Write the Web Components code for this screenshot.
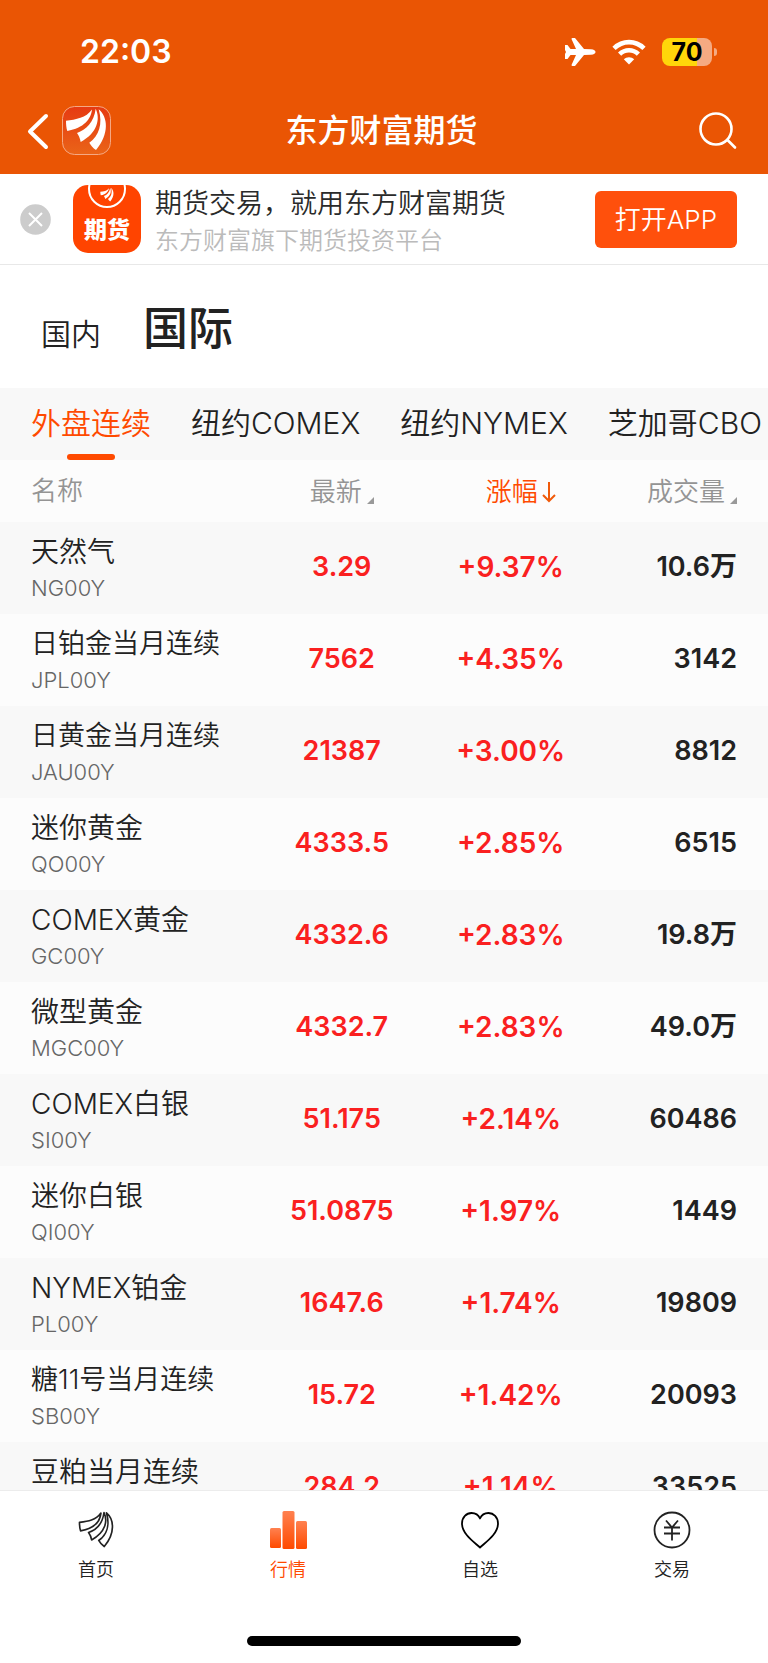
<!DOCTYPE html>
<html lang="zh-CN">
<head>
<meta charset="utf-8">
<meta name="viewport" content="width=device-width, initial-scale=1">
<title>东方财富期货</title>
<style>
  html, body { height: 100%; margin: 0; }
  body {
    font-family: Inter, "Noto Sans CJK SC", sans-serif;
    font-weight: 350;
    color: #222;
    background: #fff;
  }
</style>
</head>
<body>
<futures-app>
  <status-bar slot="top" time="22:03" battery="70"></status-bar>
  <title-bar slot="top">东方财富期货</title-bar>
  <app-banner slot="promo">
    期货交易，就用东方财富期货
    <span slot="sub">东方财富旗下期货投资平台</span>
  </app-banner>
  <market-tabs slot="promo"></market-tabs>
  <exchange-tabs slot="promo"></exchange-tabs>
  <quote-table></quote-table>
  <bottom-nav slot="bottom"></bottom-nav>
</futures-app>

<script>
const FEATHERS = `
  <path d="M4 14.7C14 13.5 24 12 30 3.5C29 13 22 22 5.3 25C4.3 22 4 18 4 14.7Z"/>
  <path d="M15 27C24 24 32 16 33.7 2.8C38.5 13 35.5 27 18.7 36C18 32 16.5 29 15 27Z"/>
  <path d="M36.7 3.3C46 11 47.5 28 34 44C31 42 28.5 39 27.3 36.7C37 30 41 18 36.7 3.3Z"/>
`;

const BUTTON_RESET = `
  button {
    margin: 0;
    padding: 0;
    border: 0;
    background: none;
    font: inherit;
    color: inherit;
    cursor: pointer;
  }
  svg { display: block; }
`;

class BaseElement extends HTMLElement {
  constructor() {
    super();
    this.attachShadow({ mode: "open" });
  }

  connectedCallback() {
    this.shadowRoot.innerHTML = this.template();
  }
}

class FuturesApp extends BaseElement {
  template() {
    return `
      <style>
        :host { display: flex; flex-direction: column; height: 100vh; overflow: hidden; }
        header { background: #ea5504; color: #fff; }
        header, footer, .promo { flex: none; }
        main { flex: 1; min-height: 0; overflow: hidden; }
      </style>
      <header><slot name="top"></slot></header>
      <div class="promo"><slot name="promo"></slot></div>
      <main><slot></slot></main>
      <footer><slot name="bottom"></slot></footer>
    `;
  }
}

class StatusBar extends BaseElement {
  template() {
    return `
      <style>
        :host {
          display: flex;
          align-items: center;
          justify-content: space-between;
          height: 36px;
          padding: 34px 51px 17px 80px;
        }
        time { font-size: 32px; font-weight: 600; line-height: 36px; }
        .icons { display: flex; align-items: center; gap: 16px; }
        svg { display: block; }
        .battery { display: flex; align-items: center; gap: 2px; }
        .level {
          width: 50px;
          border-radius: 8px;
          background: linear-gradient(90deg, #ffd60a 70%, #f5aa82 70%);
          color: #000;
          font-size: 25px;
          font-weight: 700;
          line-height: 28px;
          text-align: center;
        }
        .nub { width: 3px; height: 8px; border-radius: 0 4px 4px 0; background: #f5aa82; }
      </style>
      <time>${this.getAttribute("time")}</time>
      <div class="icons">
        <svg width="32" height="30" viewBox="0 0 32 30" fill="#fff" aria-label="飞行模式">
          <path d="M1 8H3.5L6.5 12H12L7.5 2Q7.5 1 8.5 1H11L20 12L27 12.2C30 12.4 31.5 13.6 31.5 15C31.5 16.4 30 17.6 27 17.8L20 18L11 29H8.5Q7.5 29 7.5 28L12 18H6.5L3.5 22H1V17L2 15L1 13Z"/>
        </svg>
        <svg width="34" height="26" viewBox="0 0 34 26" fill="none" stroke="#fff" aria-label="无线网络">
          <path d="M2 9.3C10.5 1 23.5 1 32 9.3" stroke-width="4.6"/>
          <path d="M7.6 15.2C13 10 21 10 26.4 15.2" stroke-width="4.6"/>
          <path d="M17 25.5L11.8 20.3C14.5 17.5 19.5 17.5 22.2 20.3Z" fill="#fff" stroke="none"/>
        </svg>
        <div class="battery">
          <div class="level">${this.getAttribute("battery")}</div>
          <div class="nub"></div>
        </div>
      </div>
    `;
  }
}

class TitleBar extends BaseElement {
  template() {
    return `
      <style>
        ${BUTTON_RESET}
        :host { display: grid; grid-template-columns: 1fr auto 1fr; align-items: center; height: 87px; padding: 0 31px 0 26px; }
        .left { display: flex; align-items: center; gap: 12px; }
        h1 { margin: 0; font-size: 32px; font-weight: 500; line-height: 36px; }
        .search { justify-self: end; }
      </style>
      <div class="left">
        <button aria-label="返回">
          <svg width="24" height="38" viewBox="0 0 24 38" fill="none" stroke="#fff" stroke-width="4" stroke-linecap="round" stroke-linejoin="round">
            <path d="M20 4L4 19.5L20 35"/>
          </svg>
        </button>
        <button aria-label="东方财富">
          <svg width="49" height="49" viewBox="0 0 49 49">
            <defs>
              <linearGradient id="g" x1="0" y1="0" x2="0" y2="1">
                <stop offset="0" stop-color="#e63a12"/>
                <stop offset="1" stop-color="#ea6418"/>
              </linearGradient>
            </defs>
            <rect x=".5" y=".5" width="48" height="48" rx="12" fill="url(#g)" stroke="#f5a883"/>
            <g fill="#fff">${FEATHERS}</g>
          </svg>
        </button>
      </div>
      <h1><slot></slot></h1>
      <button class="search" aria-label="搜索">
        <svg width="38" height="38" viewBox="0 0 38 38" fill="none" stroke="#fff" stroke-width="2.6" stroke-linecap="round">
          <circle cx="17" cy="17" r="15.5"/>
          <path d="M28.5 28L36 35.5"/>
        </svg>
      </button>
    `;
  }
}

class AppBanner extends BaseElement {
  template() {
    return `
      <style>
        ${BUTTON_RESET}
        :host {
          display: flex;
          align-items: center;
          height: 90px;
          padding: 0 31px 0 20px;
          border-bottom: 1px solid #e8e8e8;
        }
        .logo {
          display: flex;
          flex-direction: column;
          align-items: center;
          width: 68px;
          height: 68px;
          margin: 0 14px 0 22px;
          border-radius: 15px;
          background: #ff4400;
          color: #fff;
          font-size: 23px;
          font-weight: 900;
          line-height: 42px;
          overflow: hidden;
        }
        .text { flex: 1; padding-top: 6px; line-height: 37px; white-space: nowrap; }
        .title { font-size: 27px; color: #2a2a2a; }
        .sub { font-size: 24px; color: #bbb; }
        .open {
          padding: 0 20px;
          border-radius: 6px;
          background: #ff500c;
          color: #fff;
          font-size: 26px;
          line-height: 57px;
        }
      </style>
      <button aria-label="关闭">
        <svg width="31" height="31" viewBox="0 0 31 31">
          <circle cx="15.5" cy="15.5" r="15.3" fill="#ccc"/>
          <path d="M9 9L22 22M22 9L9 22" stroke="#fff" stroke-width="2"/>
        </svg>
      </button>
      <div class="logo">
        <svg width="40" height="24" viewBox="0 0 40 24">
          <circle cx="20" cy="4" r="18" fill="none" stroke="#fff" stroke-width="2"/>
          <g fill="#fff" transform="translate(12 2) scale(.33)">${FEATHERS}</g>
        </svg>
        <span>期货</span>
      </div>
      <div class="text">
        <div class="title"><slot></slot></div>
        <div class="sub"><slot name="sub"></slot></div>
      </div>
      <button class="open">打开APP</button>
    `;
  }
}

class MarketTabs extends BaseElement {
  template() {
    return `
      <style>
        ${BUTTON_RESET}
        :host { display: block; }
        div { display: flex; align-items: baseline; gap: 42px; padding: 32px 41px 22px; }
        button { font-size: 30px; line-height: 64px; }
        button[aria-selected="true"] { font-size: 45px; font-weight: 500; }
      </style>
      <div role="tablist">
        <button role="tab" aria-selected="false">国内</button>
        <button role="tab" aria-selected="true">国际</button>
      </div>
    `;
  }
}

class ExchangeTabs extends BaseElement {
  template() {
    const tabs = ["外盘连续", "纽约COMEX", "纽约NYMEX", "芝加哥CBO"];
    return `
      <style>
        ${BUTTON_RESET}
        :host { display: block; background: #f8f8f8; }
        div { display: flex; gap: 40px; padding-left: 31px; overflow: hidden; }
        button {
          display: flex;
          flex-direction: column;
          align-items: center;
          flex: none;
          height: 72px;
          padding-top: 4px;
          box-sizing: border-box;
          font-size: 30px;
          line-height: 62px;
          white-space: nowrap;
        }
        button[aria-selected="true"] { color: #ff4a00; }
        button[aria-selected="true"]::after {
          content: "";
          width: 48px;
          height: 6px;
          border-radius: 3px;
          background: #ff4a00;
        }
      </style>
      <div role="tablist">
        ${tabs.map((name, i) => `<button role="tab" aria-selected="${i === 0}">${name}</button>`).join("")}
      </div>
    `;
  }
}

class QuoteTable extends BaseElement {
  get rows() {
    return [
      ["天然气", "NG00Y", "3.29", "+9.37%", "10.6万"],
      ["日铂金当月连续", "JPL00Y", "7562", "+4.35%", "3142"],
      ["日黄金当月连续", "JAU00Y", "21387", "+3.00%", "8812"],
      ["迷你黄金", "QO00Y", "4333.5", "+2.85%", "6515"],
      ["COMEX黄金", "GC00Y", "4332.6", "+2.83%", "19.8万"],
      ["微型黄金", "MGC00Y", "4332.7", "+2.83%", "49.0万"],
      ["COMEX白银", "SI00Y", "51.175", "+2.14%", "60486"],
      ["迷你白银", "QI00Y", "51.0875", "+1.97%", "1449"],
      ["NYMEX铂金", "PL00Y", "1647.6", "+1.74%", "19809"],
      ["糖11号当月连续", "SB00Y", "15.72", "+1.42%", "20093"],
      ["豆粕当月连续", "", "284.2", "+1.14%", "33525"],
    ];
  }

  // long contract names get a slightly smaller size
  nameClass(name) {
    return name.endsWith("当月连续") && name.length > 6 ? "name long" : "name";
  }

  template() {
    const corner = `<svg width="7" height="7" viewBox="0 0 7 7"><path d="M7 0V7H0Z" fill="#999"/></svg>`;
    const arrow = `
      <svg width="14" height="22" viewBox="0 0 14 22" fill="none" stroke="#f05a0a" stroke-width="2">
        <path d="M7 1V20M1 14L7 20L13 14"/>
      </svg>`;

    const rows = this.rows
      .map(([name, code, price, change, volume]) => `
        <tr>
          <td><div class="${this.nameClass(name)}">${name}</div><div class="code">${code}</div></td>
          <td class="num up">${price}</td>
          <td class="num up change">${change}</td>
          <td class="num">${volume}</td>
        </tr>
      `)
      .join("");

    return `
      <style>
        ${BUTTON_RESET}
        :host { display: block; }
        table { width: 100%; border-collapse: collapse; table-layout: fixed; white-space: nowrap; line-height: 36px; }
        th, td { box-sizing: border-box; padding: 0; text-align: center; }
        th:first-child, td:first-child { width: 33.5%; padding-left: 31px; text-align: left; }
        th:nth-child(2), th:nth-child(3) { width: 22%; }
        th:last-child, td:last-child { padding-right: 31px; text-align: right; }
        thead tr { height: 62px; background: #fcfcfc; color: #949494; }
        th { font-size: 26px; font-weight: inherit; }
        th button { display: inline-flex; align-items: center; gap: 4px; vertical-align: middle; }
        th .corner { align-items: flex-end; gap: 5px; }
        th .corner svg { margin-bottom: 6px; }
        th.sorted { padding-left: 20px; color: #ff4a00; }
        tbody tr { height: 92px; background: #fcfcfc; }
        tbody tr:nth-child(odd) { background: #f8f8f8; }
        tbody td:first-child { padding-top: 12px; vertical-align: top; }
        .name { font-size: 28px; }
        .long { font-size: 27px; }
        .code { height: 36px; font-size: 22px; color: #666; }
        .num { padding-bottom: 2px; font-size: 27px; font-weight: 600; }
        .change { font-size: 28px; }
        .up { color: #fa2020; }
      </style>
      <table>
        <thead>
          <tr>
            <th scope="col">名称</th>
            <th scope="col"><button class="corner">最新${corner}</button></th>
            <th scope="col" class="sorted" aria-sort="descending"><button>涨幅${arrow}</button></th>
            <th scope="col"><button class="corner">成交量${corner}</button></th>
          </tr>
        </thead>
        <tbody>${rows}</tbody>
      </table>
    `;
  }
}

class BottomNav extends BaseElement {
  template() {
    return `
      <style>
        :host { display: block; border-top: 1px solid #ececec; background: #fff; }
        nav { display: flex; padding: 20px 0 54px; }
        a {
          display: flex;
          flex: 1;
          flex-direction: column;
          align-items: center;
          gap: 9px;
          color: #222;
          font-size: 18px;
          line-height: 24px;
          text-decoration: none;
        }
        a.active { color: #ff4a00; }
        .home { width: 274px; height: 10px; margin: 0 auto 17px; border-radius: 5px; background: #000; }
      </style>
      <nav>
        <a href="#home">
          <svg width="38" height="38" viewBox="1 1 46 46" fill="none" stroke="#222" stroke-width="2" stroke-linejoin="round">${FEATHERS}</svg>
          首页
        </a>
        <a href="#quotes" class="active" aria-current="page">
          <svg width="38" height="38" viewBox="0 0 38 38">
            <defs>
              <linearGradient id="bar" x1="0" y1="0" x2="0" y2="1">
                <stop offset="0" stop-color="#ff8150"/>
                <stop offset="1" stop-color="#ff4a00"/>
              </linearGradient>
            </defs>
            <g fill="url(#bar)">
              <rect x="1" y="17" width="11" height="20" rx="1.5"/>
              <rect x="13.5" y="0" width="12" height="38" rx="1.5"/>
              <rect x="27" y="10" width="11" height="28" rx="1.5"/>
            </g>
          </svg>
          行情
        </a>
        <a href="#favorites">
          <svg width="38" height="38" viewBox="0 0 38 38" fill="none" stroke="#000" stroke-width="1.8" stroke-linejoin="round">
            <path d="M19 36.5C13 31 1 23 1 12.5C1 6 5.5 2 10.5 2C14.5 2 17.5 4 19 7.5C20.5 4 23.5 2 27.5 2C32.5 2 37 6 37 12.5C37 23 25 31 19 36.5Z"/>
          </svg>
          自选
        </a>
        <a href="#trade">
          <svg width="38" height="38" viewBox="0 0 38 38" fill="none" stroke="#222" stroke-width="1.8">
            <circle cx="19" cy="19" r="17.5"/>
            <path d="M13 9.5L19 16.5L25 9.5M19 16.5V29.5M11 16.5H27M11 22.5H27"/>
          </svg>
          交易
        </a>
      </nav>
      <div class="home"></div>
    `;
  }
}

customElements.define("futures-app", FuturesApp);
customElements.define("status-bar", StatusBar);
customElements.define("title-bar", TitleBar);
customElements.define("app-banner", AppBanner);
customElements.define("market-tabs", MarketTabs);
customElements.define("exchange-tabs", ExchangeTabs);
customElements.define("quote-table", QuoteTable);
customElements.define("bottom-nav", BottomNav);
</script>
</body>
</html>
